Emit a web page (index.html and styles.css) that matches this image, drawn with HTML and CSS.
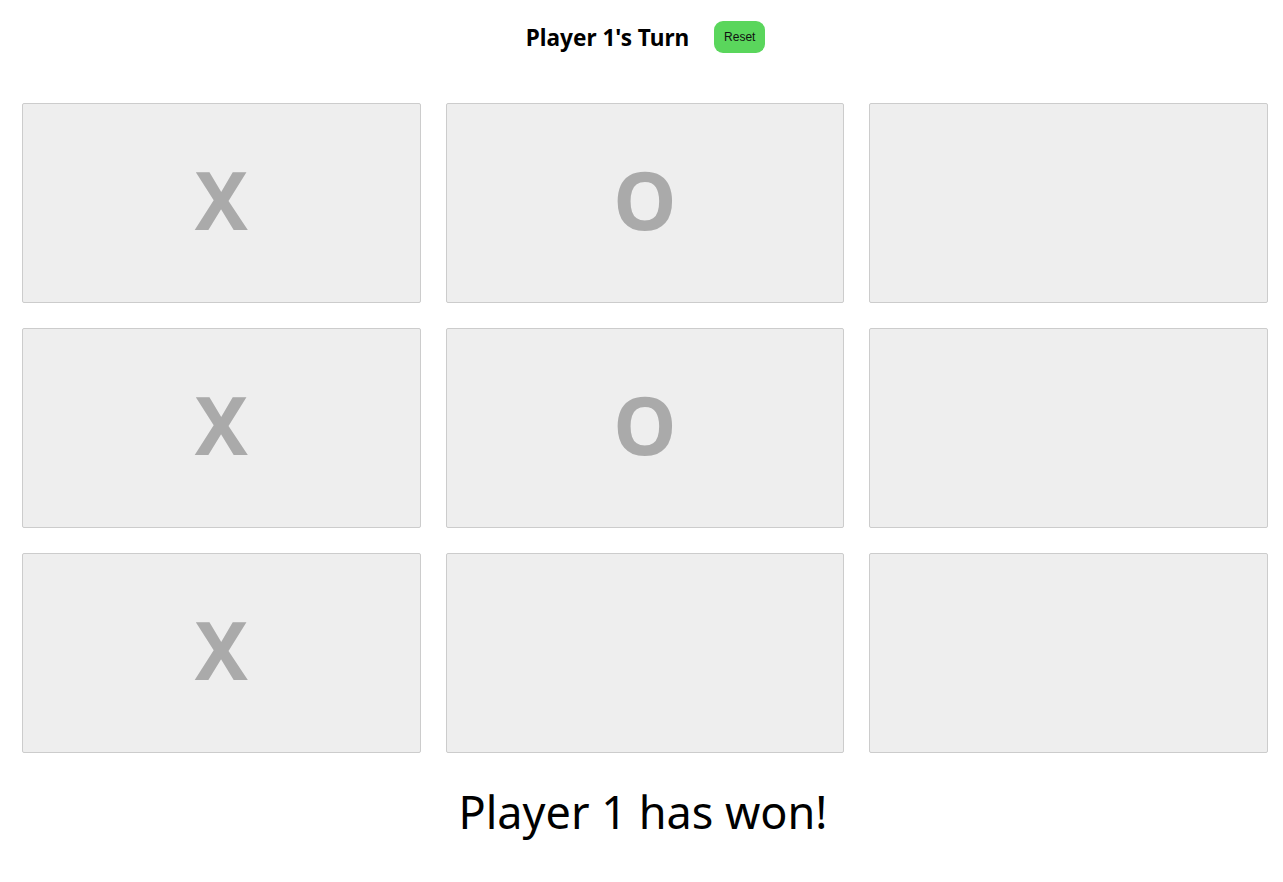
FILE: index.html
```html
<!DOCTYPE html>
<html>
<head>
<meta charset="utf-8">
<link rel="stylesheet" href="styles.css">
</head>
<body>
<div class="header">
  <h2 class="turn">Player 1's Turn</h2>
  <button class="reset">Reset</button>
</div>
<div class="board">
  <div class="cell">X</div>
  <div class="cell">O</div>
  <div class="cell"></div>
  <div class="cell">X</div>
  <div class="cell">O</div>
  <div class="cell"></div>
  <div class="cell">X</div>
  <div class="cell"></div>
  <div class="cell"></div>
</div>
<div class="result">Player 1 has won!</div>
</body>
</html>
```
FILE: styles.css
```css
html, body {
  margin: 0;
  padding: 0;
  background: #fff;
  font-family: "Noto Sans", "Open Sans", sans-serif;
}
.header {
  display: flex;
  justify-content: center;
  align-items: center;
  gap: 25px;
  padding-top: 21px;
  height: 32px;
  padding-left: 8px;
}
.turn {
  margin: 0;
  font-size: 22.6px;
  font-weight: 700;
  color: #000;
}
.reset {
  background: #5ad65c;
  border: none;
  border-radius: 9px;
  width: 51px;
  height: 32px;
  font-family: "Liberation Sans", Arial, sans-serif;
  font-size: 12px;
  color: #111;
  padding: 0;
}
.board {
  display: grid;
  grid-template-columns: repeat(3, 1fr);
  grid-auto-rows: 200px;
  gap: 25px;
  margin: 50px 15px 0 22px;
}
.cell {
  box-sizing: border-box;
  background: #eee;
  border: 1px solid #ccc;
  border-radius: 2px;
  display: flex;
  align-items: center;
  justify-content: center;
  padding-bottom: 10px;
  font-size: 80px;
  font-weight: 700;
  color: #aaa;
}
.result {
  text-align: center;
  font-size: 45px;
  margin-top: 28px;
  color: #000;
  padding-left: 3px;
}
```
